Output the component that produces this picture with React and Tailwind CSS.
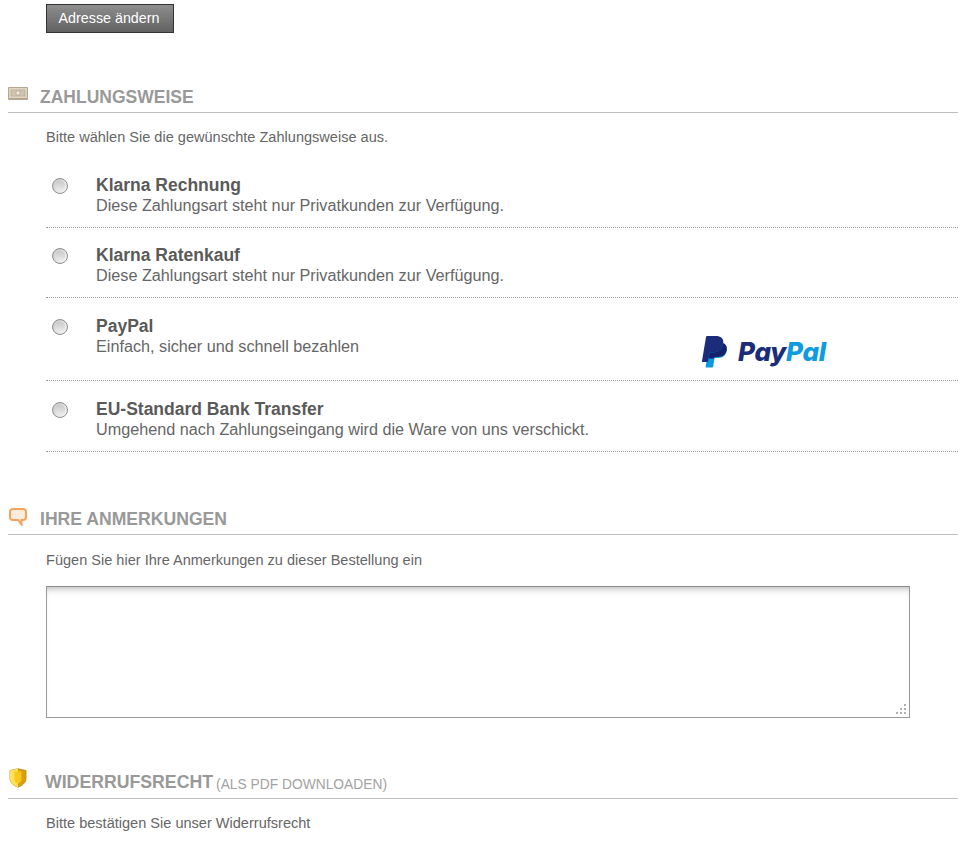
const options = [
  { title: "Klarna Rechnung", text: "Diese Zahlungsart steht nur Privatkunden zur Verfügung.", row: "h-[63px] pt-[10px]" },
  { title: "Klarna Ratenkauf", text: "Diese Zahlungsart steht nur Privatkunden zur Verfügung.", row: "h-[70px] pt-[17px]" },
  { title: "PayPal", text: "Einfach, sicher und schnell bezahlen", row: "h-[83px] pt-[18px]", logo: true },
  { title: "EU-Standard Bank Transfer", text: "Umgehend nach Zahlungseingang wird die Ware von uns verschickt.", row: "h-[71px] pt-[18px]" },
];

function MoneyIcon() {
  return (
    <svg width="20" height="13" viewBox="0 0 20 13">
      <rect x="0" y="0" width="20" height="13" rx="1" fill="#b5a68f" />
      <rect x="1" y="1" width="18" height="10" fill="#ded5c3" />
      <rect x="3" y="3" width="14" height="6" fill="#cfc5b0" stroke="#ac9f8a" strokeWidth="0.5" />
      <circle cx="10" cy="6" r="2.2" fill="#eee8da" stroke="#a89a84" strokeWidth="0.6" />
    </svg>
  );
}

function BubbleIcon() {
  return (
    <svg width="18" height="18" viewBox="0 0 18 18">
      <path
        d="M4 1h10a3 3 0 0 1 3 3v5a3 3 0 0 1-3 3h-1.500v4.500L9 12H4a3 3 0 0 1-3-3V4a3 3 0 0 1 3-3z"
        fill="#fdebdc"
        stroke="#f2a25e"
        strokeWidth="2"
      />
    </svg>
  );
}

function ShieldIcon() {
  return (
    <svg width="18" height="20" viewBox="0 0 18 20">
      <path d="M1 2.500 9 .8l8 1.700v8c0 4.200-3.600 7-8 8.700-4.400-1.700-8-4.500-8-8.700z" fill="#d99f0c" stroke="#b98a10" strokeWidth="0.8" />
      <path d="M9 .8v18.400c-4.400-1.700-8-4.500-8-8.700v-8z" fill="#ffe15a" />
      <path d="M5.500 3.500h7v8c0 1.800-1.600 3.300-3.500 4.300-1.900-1-3.500-2.500-3.500-4.300z" fill="#f8c81c" />
    </svg>
  );
}

function Radio() {
  return (
    <span className="flex h-4 w-4 items-center justify-center rounded-full border border-[#8f8f8f] bg-gradient-to-br from-[#c4c4c4] to-[#fafafa]">
      <span className="h-[10px] w-[10px] rounded-full bg-gradient-to-b from-[#c9c9c9] to-[#ededed]" />
    </span>
  );
}

function PaypalLogo() {
  return (
    <div className="flex items-center gap-[10px]">
      <svg width="26" height="32" viewBox="0 0 26 32">
        <path d="M8 8h11c4 0 6.500 2.500 5.800 6.500-.8 4.800-4 7.500-8.800 7.500h-3.500l-1.300 8.500c-.1.600-.5 1-1.100 1H4.500c-.7 0-1-.4-.9-1z" fill="#0a9ade" />
        <path d="M5.200 0H14c5 0 8 2.800 7.200 7.500C20.300 13 16.500 16.500 11 16.500H7.500L6 25.300c-.1.500-.5.700-1 .7H.8c-.6 0-.9-.4-.8-1L4 1c.1-.6.600-1 1.200-1z" fill="#1a2c7a" />
        <path d="M7.500 16.500H11c5.500 0 9.300-3.500 10.200-9 .1-.2.100-.4.100-.6 2.300 1 3.900 3.200 3.500 6.600-.8 4.800-4 7.500-8.800 7.500h-3.500l-.3 1.500H6.700z" fill="#14216b" />
      </svg>
      <span className="font-['Inter',sans-serif] text-[26px] font-extrabold italic leading-none tracking-[-0.3px]">
        <span className="text-[#1a2c7a]">Pay</span>
        <span className="text-[#0f9be0]">Pal</span>
      </span>
    </div>
  );
}

function SectionHeading({ icon, iconClass, title, titleClass, suffix, className }) {
  return (
    <div className={`flex items-end border-b border-[#bdbdbd] ${className}`}>
      <div className={iconClass}>{icon}</div>
      <h2 className={`font-bold uppercase leading-[22px] text-[#999] ${titleClass}`}>
        {title}
        {suffix && <span className="ml-[3px] align-[-1px] text-[13.8px] font-normal text-[#a3a3a3]">{suffix}</span>}
      </h2>
    </div>
  );
}

export default function App() {
  return (
    <div className="h-[847px] overflow-hidden bg-white px-2 pt-1 font-['Liberation_Sans',Arial,sans-serif] text-[14.55px] text-[#666]">
      <button className="ml-[38px] block h-[29px] w-[128px] border border-[#333] bg-gradient-to-b from-[#8e8e8e] to-[#626262] pr-[2px] pt-[1px] text-[14.3px] text-white">
        Adresse ändern
      </button>

      {/* Zahlungsweise */}
      <SectionHeading
        icon={<MoneyIcon />}
        iconClass="mb-[12px] w-[32px]"
        title="Zahlungsweise"
        titleClass="pb-[4px] text-[17.5px]"
        className="mt-[53px] h-[27px] w-[950px]"
      />
      <p className="ml-[38px] mt-[16px] leading-[17px]">Bitte wählen Sie die gewünschte Zahlungsweise aus.</p>
      <div className="ml-[38px] mt-[19px] w-[912px]">
        {options.map((o) => (
          <div
            key={o.title}
            className={`relative flex border-b border-dotted border-[#999] ${o.row}`}
          >
            <div className="w-[50px] pl-[6px] pt-[3px]">
              <Radio />
            </div>
            <div>
              <div className="text-[17.5px] font-bold leading-[21px] text-[#5a5a5a]">{o.title}</div>
              <div className="text-[16.22px] leading-[19px]">{o.text}</div>
            </div>
            {o.logo && (
              <div className="absolute left-[656px] top-[38px]">
                <PaypalLogo />
              </div>
            )}
          </div>
        ))}
      </div>

      {/* Anmerkungen */}
      <SectionHeading
        icon={<BubbleIcon />}
        iconClass="mb-[8px] ml-[1px] w-[31px]"
        title="Ihre Anmerkungen"
        titleClass="pb-[4px] text-[17.6px]"
        className="mt-[56px] h-[27px] w-[950px]"
      />
      <p className="ml-[38px] mt-[17px] leading-[17px]">Fügen Sie hier Ihre Anmerkungen zu dieser Bestellung ein</p>
      <div className="relative ml-[38px] mt-[17px] h-[132px] w-[864px]">
        <textarea className="block h-full w-full resize-none border border-[#9a9a9a] border-t-[#8a8a8a] bg-white shadow-[inset_0_7px_7px_-5px_#bbb] outline-none" />
        <svg className="absolute bottom-[2px] right-[2px]" width="12" height="12" viewBox="0 0 12 12" fill="#b0b0b0">
          <rect x="8" y="0" width="2" height="2" />
          <rect x="4" y="4" width="2" height="2" />
          <rect x="8" y="4" width="2" height="2" />
          <rect x="0" y="8" width="2" height="2" />
          <rect x="4" y="8" width="2" height="2" />
          <rect x="8" y="8" width="2" height="2" />
        </svg>
      </div>

      {/* Widerrufsrecht */}
      <SectionHeading
        icon={<ShieldIcon />}
        iconClass="mb-[10px] ml-[1px] w-[36px]"
        title="Widerrufsrecht"
        titleClass="pb-[2px] text-[17.7px]"
        suffix="(als PDF downloaden)"
        className="mt-[52px] h-[29px] w-[950px]"
      />
      <p className="ml-[38px] mt-[16px] leading-[17px]">Bitte bestätigen Sie unser Widerrufsrecht</p>
    </div>
  );
}
